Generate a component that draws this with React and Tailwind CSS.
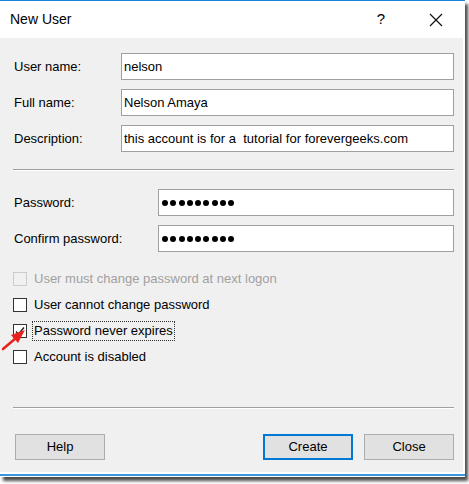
const font = { fontFamily: '"Liberation Sans", Arial, sans-serif' };

function Field({ label, value }) {
  return (
    <div className="flex items-center h-[27px]">
      <div className="w-[107px] shrink-0 text-[13px] text-black pt-[1px]">{label}</div>
      <div className="flex-1 h-full bg-white border border-[#a0a0a0] flex items-center px-[2px] text-[13px] text-black whitespace-pre">
        {value}
      </div>
    </div>
  );
}

function Dots() {
  return (
    <div className="flex gap-[2.3px] pl-[3px]">
      {Array.from({ length: 9 }).map((_, i) => (
        <div key={i} className="w-[6px] h-[6px] rounded-full bg-black" />
      ))}
    </div>
  );
}

function PasswordField({ label }) {
  return (
    <div className="flex items-center h-[27px]">
      <div className="w-[144px] shrink-0 text-[13px] text-black pt-[1px]">{label}</div>
      <div className="flex-1 h-full bg-white border border-[#a0a0a0] flex items-center">
        <Dots />
      </div>
    </div>
  );
}

function Check({ label, checked, disabled, focused }) {
  return (
    <div className="flex items-center h-[26px]">
      <div
        className={`w-[14px] h-[14px] shrink-0 border flex items-center justify-center ${
          disabled ? "border-[#cccccc] bg-[#f0f0f0]" : "border-[#333333] bg-white"
        }`}
      >
        {checked && (
          <svg width="12" height="12" viewBox="0 0 12 12">
            <path d="M2 6.5 L4.5 9 L10 2.5" fill="none" stroke="#222" strokeWidth="1.4" />
          </svg>
        )}
      </div>
      <div
        className={`ml-[5px] px-[1px] text-[13px] leading-[18px] ${
          disabled ? "text-[#a0a0a0]" : "text-black"
        } ${focused ? "border border-dotted border-[#333]" : "border border-transparent"}`}
      >
        {label}
      </div>
    </div>
  );
}

function Button({ children, primary }) {
  return (
    <div
      className={`w-[90px] h-[26px] flex items-center justify-center bg-[#e1e1e1] text-[13px] text-black ${
        primary ? "border-2 border-[#0078d7]" : "border border-[#adadad]"
      }`}
    >
      {children}
    </div>
  );
}

export default function App() {
  return (
    <div className="w-[469px] h-[484px] bg-white overflow-hidden" style={font}>
      <div className="w-[465px] h-[477px] bg-white shadow-[3px_4px_3px_rgba(0,0,0,0.7)] border-t border-[#1883d7] flex flex-col">
        {/* title bar */}
        <div className="h-[37px] shrink-0 flex items-center bg-white pr-[22px]">
          <div className="pl-[10px] text-[14px] text-black flex-1">New User</div>
          <div className="text-[15px] text-black mr-[44px]">?</div>
          <svg width="14" height="14" viewBox="0 0 14 14">
            <path d="M1 1 L13 13 M13 1 L1 13" stroke="#111" strokeWidth="1.2" />
          </svg>
        </div>
        {/* body */}
        <div className="h-[434px] shrink-0 bg-[#f0f0f0] mr-[2px] pl-[14px] pr-[9px] pt-[15px] relative">
          <div className="flex flex-col gap-[9px]">
            <Field label="User name:" value="nelson" />
            <Field label="Full name:" value="Nelson Amaya" />
            <Field label="Description:" value="this account is for a  tutorial for forevergeeks.com" />
          </div>
          <div className="mt-[17px] ml-[-1px] border-t border-[#a0a0a0] border-b border-b-white h-[2px]" />
          <div className="mt-[18px] flex flex-col gap-[9px]">
            <PasswordField label="Password:" />
            <PasswordField label="Confirm password:" />
          </div>
          <div className="mt-[14px] ml-[-1px] flex flex-col">
            <Check label="User must change password at next logon" disabled />
            <Check label="User cannot change password" />
            <Check label="Password never expires" checked focused />
            <Check label="Account is disabled" />
          </div>
          <div className="mt-[37px] ml-[-1px] border-t border-[#a0a0a0] border-b border-b-white h-[2px]" />
          <div className="mt-[25px] flex items-center ml-[1px]">
            <Button>Help</Button>
            <div className="flex-1" />
            <Button primary>Create</Button>
            <div className="w-[11px]" />
            <Button>Close</Button>
          </div>
          {/* red annotation arrow */}
          <svg className="absolute left-[0px] top-[288px]" width="30" height="26" viewBox="0 0 30 26">
            <path d="M3 23 L16 12" stroke="#e8231f" strokeWidth="2.6" strokeLinecap="round" />
            <path d="M25 4 L11 9 L18 17 Z" fill="#e8231f" />
          </svg>
        </div>
        <div className="h-[2px] shrink-0 bg-white" />
        <div className="h-[1.5px] shrink-0 bg-[#3c95dd]" />
        <div className="flex-1 bg-white" />
      </div>
    </div>
  );
}
